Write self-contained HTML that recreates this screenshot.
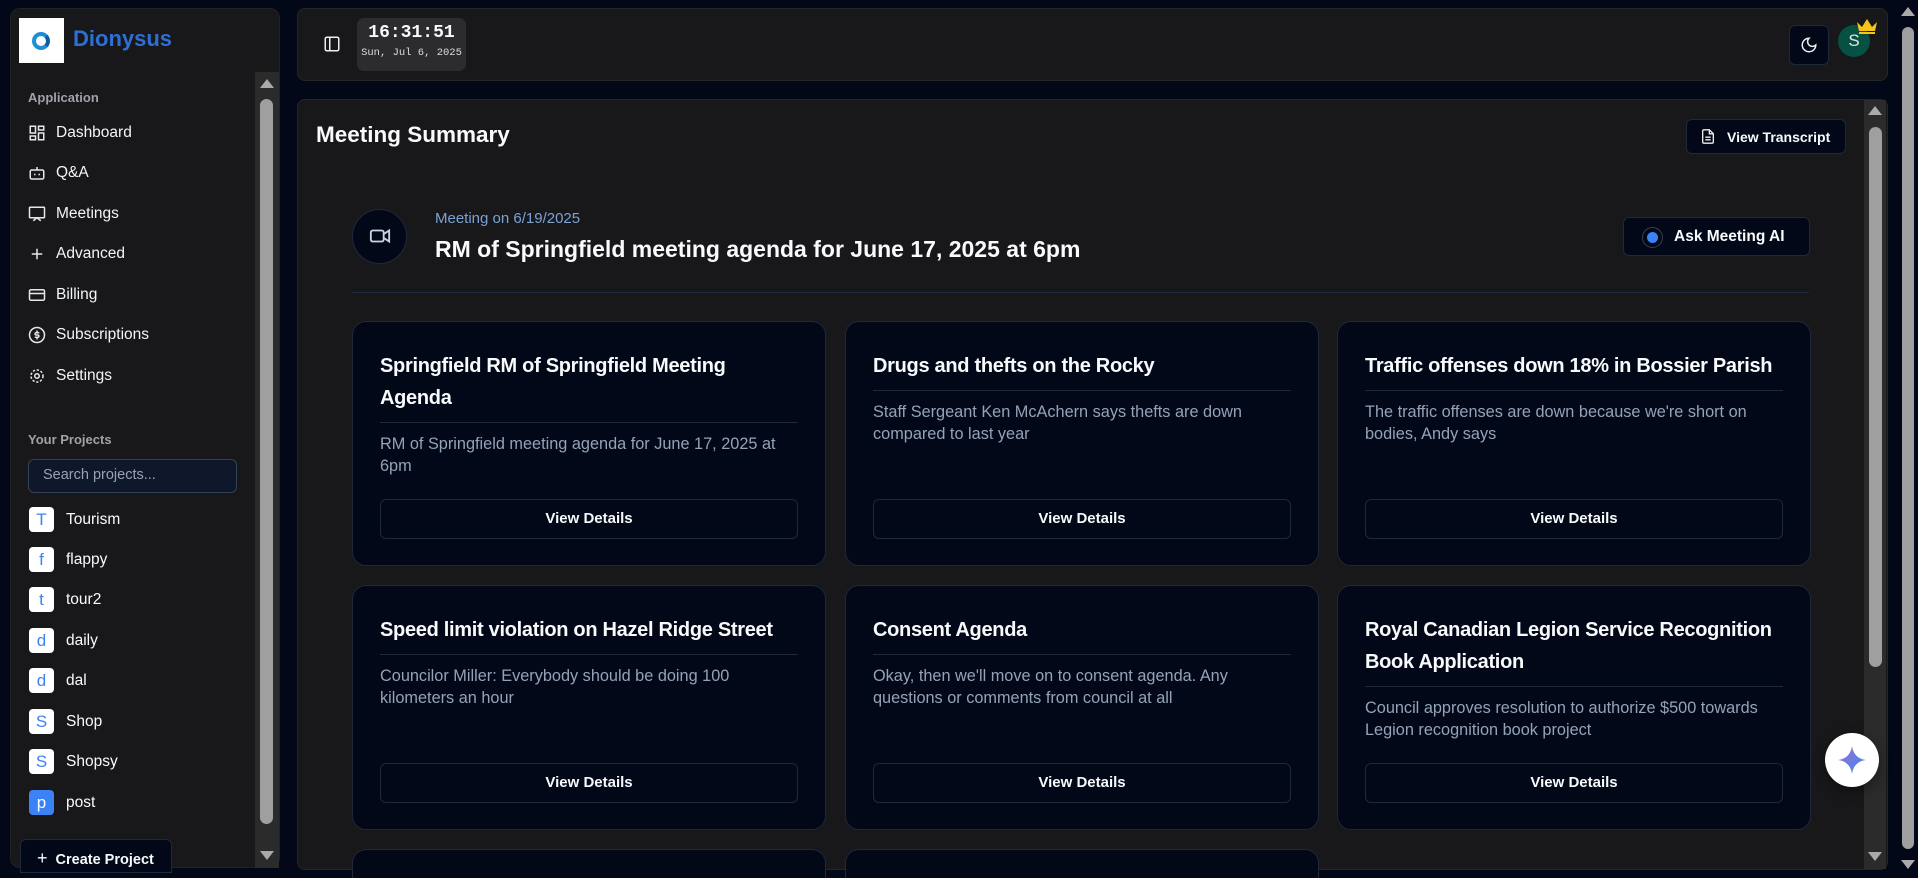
<!DOCTYPE html>
<html><head><meta charset="utf-8"><style>
*{box-sizing:border-box;margin:0;padding:0}
body{width:1918px;height:876px;background:#020817;font-family:"Liberation Sans",sans-serif;color:#f8fafc;position:relative;overflow:hidden}
.abs{position:absolute}
.side{left:10px;top:8px;width:270px;height:860px;background:#18181b;border-radius:10px;border:1px solid #222}
.nav{position:absolute;left:28px;font-size:15.5px;color:#f1f5f9;display:flex;align-items:center;gap:10px}
.nav svg{width:18px;height:18px;stroke:#e5e7eb;fill:none;stroke-width:2}
.proj{position:absolute;left:29px;font-size:15.5px;display:flex;align-items:center;gap:12px}
.proj b{width:25px;height:25px;background:#fff;border-radius:4px;color:#3b82f6;font-weight:normal;display:flex;align-items:center;justify-content:center;font-size:17px}
.panel{background:#18181b;border:1px solid #262629;border-radius:8px}
.card{position:absolute;width:474px;height:245px;background:#020817;border:1px solid #1e293b;border-radius:14px;padding:28px 27px 0 27px}
.card h3{font-size:20px;letter-spacing:-0.3px;line-height:32px;font-weight:bold;padding-bottom:8px;border-bottom:1px solid #1e293b;margin-bottom:10px}
.card p{font-size:16.3px;line-height:22px;color:#94a3b8}
.card .btn{position:absolute;left:27px;right:27px;top:177px;height:40px;border:1px solid #1e293b;border-radius:6px;text-align:center;line-height:38px;font-weight:bold;font-size:15px}
.sb{background:#2b2b2b}
.thumb{background:#9f9f9f;border-radius:8px}
.tri{width:0;height:0;border-left:7px solid transparent;border-right:7px solid transparent}
</style></head><body>
<div class="abs side"></div>
<div class="abs" style="left:19px;top:18px;width:45px;height:45px;background:#fff"></div>
<div class="abs" style="left:32px;top:32px;width:18px;height:18px;border-radius:50%;border:4px solid #1d8fd6;border-right-color:#0b5fa8"></div>
<div class="abs" style="left:73px;top:26px;font-size:22px;font-weight:bold;color:#2e6fd6">Dionysus</div>
<div class="abs" style="left:28px;top:90px;font-size:13px;color:#a1a1aa;font-weight:bold">Application</div>
<div class="nav" style="top:124px"><svg viewBox="0 0 24 24"><rect x="3" y="3" width="7" height="9"/><rect x="14" y="3" width="7" height="5"/><rect x="14" y="12" width="7" height="9"/><rect x="3" y="16" width="7" height="5"/></svg>Dashboard</div>
<div class="nav" style="top:164px"><svg viewBox="0 0 24 24"><rect x="3" y="8" width="18" height="12" rx="2"/><path d="M12 8V4M9 13v2M15 13v2"/></svg>Q&amp;A</div>
<div class="nav" style="top:205px"><svg viewBox="0 0 24 24"><rect x="2" y="3" width="20" height="14" rx="1"/><path d="M7 21l5-4 5 4"/></svg>Meetings</div>
<div class="nav" style="top:245px"><svg viewBox="0 0 24 24"><path d="M12 5v14M5 12h14"/></svg>Advanced</div>
<div class="nav" style="top:286px"><svg viewBox="0 0 24 24"><rect x="2" y="5" width="20" height="14" rx="2"/><path d="M2 10h20"/></svg>Billing</div>
<div class="nav" style="top:326px"><svg viewBox="0 0 24 24"><circle cx="12" cy="12" r="10"/><path d="M15 9h-4a1.5 1.5 0 0 0 0 3h2a1.5 1.5 0 0 1 0 3H9M12 6v2M12 16v2"/></svg>Subscriptions</div>
<div class="nav" style="top:367px"><svg viewBox="0 0 24 24"><circle cx="12" cy="12" r="3"/><circle cx="12" cy="12" r="8" stroke-dasharray="3 2.3"/></svg>Settings</div>
<div class="abs" style="left:28px;top:432px;font-size:13px;color:#a1a1aa;font-weight:bold">Your Projects</div>
<div class="abs" style="left:28px;top:459px;width:209px;height:34px;border:1px solid #334155;border-radius:6px;background:#0f172a;font-size:14.5px;color:#94a3b8;padding:7px 14px">Search projects...</div>
<div class="proj" style="top:507px"><b>T</b>Tourism</div>
<div class="proj" style="top:547px"><b>f</b>flappy</div>
<div class="proj" style="top:587px"><b>t</b>tour2</div>
<div class="proj" style="top:628px"><b>d</b>daily</div>
<div class="proj" style="top:668px"><b>d</b>dal</div>
<div class="proj" style="top:709px"><b>S</b>Shop</div>
<div class="proj" style="top:749px"><b>S</b>Shopsy</div>
<div class="proj" style="top:790px"><b style="background:#3b82f6;color:#fff">p</b>post</div>
<div class="abs" style="left:20px;top:839px;width:152px;height:34px;border:1px solid #1e293b;border-radius:6px 6px 0 0;background:#020817;font-size:14.5px;font-weight:bold;padding:8px 0 0 16px"><span style="font-weight:normal;font-size:18px;margin-right:8px">+</span>Create Project</div>
<div class="abs sb" style="left:255px;top:72px;width:24px;height:796px"></div>
<div class="abs thumb" style="left:260px;top:99px;width:13px;height:725px;border-radius:7px"></div>
<div class="abs tri" style="left:260px;top:79px;border-bottom:9px solid #aaa"></div>
<div class="abs tri" style="left:260px;top:851px;border-top:9px solid #aaa"></div>

<div class="abs panel" style="left:297px;top:8px;width:1591px;height:73px"></div>
<svg class="abs" style="left:323px;top:35px" width="18" height="18" viewBox="0 0 24 24" fill="none" stroke="#eee" stroke-width="2"><rect x="3" y="3" width="18" height="18" rx="2"/><path d="M9 3v18"/></svg>
<div class="abs" style="left:357px;top:18px;width:109px;height:53px;background:#2c2c2f;border-radius:7px;font-family:'Liberation Mono',monospace;text-align:center"><div style="font-size:18px;font-weight:bold;margin-top:5px">16:31:51</div><div style="font-size:10.5px;color:#ddd;margin-top:4px">Sun, Jul 6, 2025</div></div>
<div class="abs" style="left:1789px;top:25px;width:40px;height:40px;background:#020817;border:1px solid #1e293b;border-radius:6px"></div>
<svg class="abs" style="left:1800px;top:36px" width="18" height="18" viewBox="0 0 24 24" fill="none" stroke="#eee" stroke-width="2"><path d="M12 3a6 6 0 0 0 9 9 9 9 0 1 1-9-9z"/></svg>
<div class="abs" style="left:1838px;top:25px;width:32px;height:32px;border-radius:50%;background:#065143;color:#e5e5e5;font-size:17px;text-align:center;line-height:32px">S</div>
<svg class="abs" style="left:1856px;top:18px" width="22" height="18" viewBox="0 0 22 18"><path d="M1 4l5 5 5-8 5 8 5-5-2 9H3z" fill="#f5c518"/><rect x="3" y="14" width="16" height="2" fill="#f5c518"/></svg>

<div class="abs panel" style="left:297px;top:99px;width:1591px;height:771px"></div>
<div class="abs" style="left:316px;top:122px;font-size:22.5px;font-weight:bold">Meeting Summary</div>
<div class="abs" style="left:1686px;top:119px;width:160px;height:35px;background:#020817;border:1px solid #1e293b;border-radius:6px;font-size:14px;font-weight:bold;padding:9px 0 0 40px">View Transcript</div>
<svg class="abs" style="left:1700px;top:128px" width="16" height="17" viewBox="0 0 24 24" fill="none" stroke="#eee" stroke-width="2"><path d="M14 2H6a2 2 0 0 0-2 2v16a2 2 0 0 0 2 2h12a2 2 0 0 0 2-2V8z"/><path d="M14 2v6h6M8 13h8M8 17h8"/></svg>
<div class="abs" style="left:352px;top:209px;width:55px;height:55px;border-radius:50%;background:#020817;border:1px solid #1e293b"></div>
<svg class="abs" style="left:367px;top:225px" width="26" height="22" viewBox="0 0 24 24" fill="none" stroke="#cbd5e1" stroke-width="2"><rect x="2" y="6" width="14" height="12" rx="2"/><path d="M16 10l6-4v12l-6-4"/></svg>
<div class="abs" style="left:435px;top:210px;font-size:15px;color:#7aa2d6">Meeting on 6/19/2025</div>
<div class="abs" style="left:435px;top:236px;font-size:23px;font-weight:bold">RM of Springfield meeting agenda for June 17, 2025 at 6pm</div>
<div class="abs" style="left:1623px;top:217px;width:187px;height:39px;background:#020817;border:1px solid #1e293b;border-radius:6px;font-size:15.5px;font-weight:bold;padding:10px 0 0 50px">Ask Meeting AI</div>
<div class="abs" style="left:1642px;top:227px;width:21px;height:21px;border-radius:50%;border:1px solid #334155;background:#020817"></div>
<div class="abs" style="left:1647px;top:232px;width:11px;height:11px;border-radius:50%;background:#3b82f6"></div>
<div class="abs" style="left:352px;top:292px;width:1457px;height:1px;background:#1e293b"></div>

<div class="card" style="left:352px;top:321px"><h3>Springfield RM of Springfield Meeting Agenda</h3><p>RM of Springfield meeting agenda for June 17, 2025 at 6pm</p><div class="btn">View Details</div></div>
<div class="card" style="left:845px;top:321px"><h3>Drugs and thefts on the Rocky</h3><p>Staff Sergeant Ken McAchern says thefts are down compared to last year</p><div class="btn">View Details</div></div>
<div class="card" style="left:1337px;top:321px"><h3>Traffic offenses down 18% in Bossier Parish</h3><p>The traffic offenses are down because we're short on bodies, Andy says</p><div class="btn">View Details</div></div>
<div class="card" style="left:352px;top:585px"><h3>Speed limit violation on Hazel Ridge Street</h3><p>Councilor Miller: Everybody should be doing 100 kilometers an hour</p><div class="btn">View Details</div></div>
<div class="card" style="left:845px;top:585px"><h3>Consent Agenda</h3><p>Okay, then we'll move on to consent agenda. Any questions or comments from council at all</p><div class="btn">View Details</div></div>
<div class="card" style="left:1337px;top:585px"><h3>Royal Canadian Legion Service Recognition Book Application</h3><p>Council approves resolution to authorize $500 towards Legion recognition book project</p><div class="btn">View Details</div></div>
<div class="card" style="left:352px;top:849px;height:20px;border-bottom:none;border-radius:14px 14px 0 0"></div>
<div class="card" style="left:845px;top:849px;height:20px;border-bottom:none;border-radius:14px 14px 0 0"></div>

<div class="abs sb" style="left:1864px;top:100px;width:22px;height:769px"></div>
<div class="abs thumb" style="left:1869px;top:127px;width:13px;height:540px"></div>
<div class="abs tri" style="left:1868px;top:106px;border-bottom:9px solid #aaa"></div>
<div class="abs tri" style="left:1868px;top:852px;border-top:9px solid #aaa"></div>
<div class="abs" style="left:1898px;top:0;width:20px;height:876px;background:#020817"></div>
<div class="abs thumb" style="left:1902px;top:27px;width:12px;height:822px"></div>
<div class="abs tri" style="left:1901px;top:7px;border-bottom:9px solid #aaa"></div>
<div class="abs tri" style="left:1901px;top:860px;border-top:9px solid #aaa"></div>

<div class="abs" style="left:1825px;top:733px;width:54px;height:54px;border-radius:50%;background:#fff;box-shadow:0 4px 12px rgba(0,0,0,.4)"></div>
<svg class="abs" style="left:1836px;top:744px" width="32" height="32" viewBox="0 0 32 32"><defs><linearGradient id="g" x1="0" y1="0" x2="1" y2="1"><stop offset="0" stop-color="#9b72cb"/><stop offset="1" stop-color="#4285f4"/></linearGradient></defs><path d="M16 2C17 10 22 15 30 16 22 17 17 22 16 30 15 22 10 17 2 16 10 15 15 10 16 2z" fill="url(#g)"/></svg>
</body></html>
